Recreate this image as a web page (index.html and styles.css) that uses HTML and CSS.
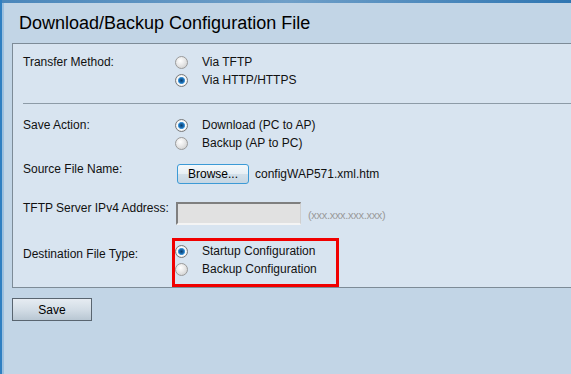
FILE: index.html
```html
<!DOCTYPE html>
<html lang="en">
<head>
  <meta charset="UTF-8" />
  <title>Download/Backup Configuration File</title>
  <link rel="stylesheet" href="styles.css">
</head>
<body>
  <div class="topbar"></div>

  <h1>Download/Backup Configuration File</h1>

  <div class="panel">
    <div class="row">
      <span class="label">Transfer Method:</span>
      <div class="options">
        <label class="option"><span class="radio"></span>Via TFTP</label>
        <label class="option"><span class="radio checked"></span>Via HTTP/HTTPS</label>
      </div>
    </div>

    <div class="divider"></div>

    <div class="row">
      <span class="label">Save Action:</span>
      <div class="options">
        <label class="option"><span class="radio checked"></span>Download (PC to AP)</label>
        <label class="option"><span class="radio"></span>Backup (AP to PC)</label>
      </div>
    </div>

    <div class="row row-file">
      <span class="label">Source File Name:</span>
      <div class="value">
        <button class="browse">Browse...</button>
        <span class="filename">configWAP571.xml.htm</span>
      </div>
    </div>

    <div class="row row-tftp">
      <span class="label">TFTP Server IPv4 Address:</span>
      <div class="value">
        <span class="textbox"></span>
        <span class="hint">(xxx.xxx.xxx.xxx)</span>
      </div>
    </div>

    <div class="row row-dest">
      <span class="label">Destination File Type:</span>
      <div class="options highlight">
        <label class="option"><span class="radio checked"></span>Startup Configuration</label>
        <label class="option"><span class="radio"></span>Backup Configuration</label>
      </div>
    </div>
  </div>

  <button class="save">Save</button>
</body>
</html>
```

FILE: styles.css
```css
body {
  margin: 0;
  min-height: 374px;
  font-family: "Liberation Sans", Arial, sans-serif;
  font-size: 12px;
  color: #111;
  background: #c2d5e6;
  border-left: 2px solid #2f7fc1;
  box-shadow: inset 2px 0 0 #9cc0df;
  overflow: hidden;
}
.topbar {
  height: 3px;
  background: linear-gradient(90deg, #4b87bb 0%, #6f9fc8 50%, #2f76b2 100%);
}
h1 {
  margin: 0;
  padding: 9px 0 0 17px;
  height: 31px;
  font-size: 18px;
  font-weight: normal;
  color: #000;
  line-height: 22px;
}
.panel {
  margin-left: 10px;
  border: 1px solid #7d8b97;
  border-right: none;
  background: #d8e4f0;
  padding: 9px 0 3px 10px;
}
.row {
  display: flex;
  line-height: 18px;
}
.label {
  width: 149px;
  flex: none;
}
.options {
  display: flex;
  flex-direction: column;
  border: 3px solid transparent;
  margin-top: -3px;
  margin-bottom: -3px;
}
.options.highlight {
  border-color: #f00000;
  width: 161px;
  padding: 1px 0 6px;
}
.option {
  display: flex;
  align-items: center;
  height: 18px;
}
.radio {
  width: 11px;
  height: 11px;
  border-radius: 50%;
  border: 1px solid #9a9a9a;
  background: radial-gradient(circle at 40% 35%, #ffffff 0%, #e8e8e8 45%, #c8c8c8 100%);
  margin-right: 14px;
  box-sizing: content-box;
}
.radio.checked {
  border-color: #7a7a7a;
  background: radial-gradient(circle, #0a3a66 0%, #1d6fb5 30%, #4ea0de 42%, #ffffff 50%, #e0e0e0 80%, #bfbfbf 100%);
}
.divider {
  height: 1px;
  background: #8d9ba7;
  margin: 14px 0 12px;
}
.row-file {
  margin-top: 8px;
}
.value {
  display: flex;
  align-items: center;
  padding-top: 4px;
}
.browse {
  margin: 0 6px 0 5px;
  width: 72px;
  height: 20px;
  padding: 0;
  font-family: inherit;
  font-size: 12px;
  color: #000;
  border: 1px solid #3c9ad6;
  border-radius: 3px;
  background: linear-gradient(#f4f8fb 0%, #e6eef4 50%, #d3e0ea 51%, #c6d6e3 100%);
}
.row-tftp {
  margin-top: 15px;
}
.row-tftp .value {
  padding-top: 3px;
}
.textbox {
  display: block;
  width: 122px;
  height: 19px;
  margin-left: 4px;
  background: #e1e1e1;
  border-top: 2px solid #7f7f7f;
  border-left: 2px solid #7f7f7f;
  border-right: 1px solid #cfcfcf;
  border-bottom: 2px solid #f4f4f4;
}
.hint {
  margin-left: 7px;
  font-size: 11px;
  letter-spacing: -0.3px;
  color: #9a9a9a;
  padding-top: 2px;
}
.row-dest {
  margin-top: 16px;
}
.row-dest .label {
  padding-top: 4px;
}
.save {
  display: block;
  margin: 10px 0 0 10px;
  width: 80px;
  height: 23px;
  padding: 0;
  font-family: inherit;
  font-size: 12px;
  color: #000;
  border: 1px solid #596570;
  background: linear-gradient(#e6ecf2 0%, #d3dde6 50%, #b9c7d3 100%);
}
```
